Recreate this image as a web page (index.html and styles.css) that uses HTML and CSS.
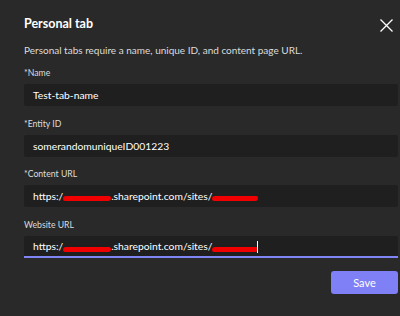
FILE: index.html
```html
<!DOCTYPE html>
<html lang="en">
<head>
  <meta charset="UTF-8">
  <title>Personal tab</title>
  <link rel="stylesheet" href="styles.css">
</head>
<body>

<div class="dialog">

  <header class="head">
    <h1>Personal tab</h1>
    <svg class="close" width="13" height="13" viewBox="0 0 13 13">
      <path d="M0.5 0.5 L12.5 12.5 M12.5 0.5 L0.5 12.5" stroke="#ffffff" stroke-width="1.3" fill="none"/>
    </svg>
  </header>

  <p class="intro">Personal tabs require a name, unique ID, and content page URL.</p>

  <div class="field">
    <label>*Name</label>
    <div class="box">Test-tab-name</div>
  </div>

  <div class="field">
    <label>*Entity ID</label>
    <div class="box">somerandomuniqueID001223</div>
  </div>

  <div class="field">
    <label>*Content URL</label>
    <div class="box">https:/<span class="redact r1"></span>.sharepoint.com/sites/<span class="redact r2"></span></div>
  </div>

  <div class="field">
    <label>Website URL</label>
    <div class="box active">https:/<span class="redact r1"></span>.sharepoint.com/sites/<span class="redact r2"></span><span class="caret"></span></div>
  </div>

  <div class="actions">
    <button class="save">Save</button>
  </div>

</div>

</body>
</html>
```

FILE: styles.css
```css
html{
  font-family: Lato, "Open Sans", sans-serif;
}

body{
  margin: 0;
  background-color: #292929;
  color: #ffffff;
}

.dialog{
  padding: 14px 2px 0 24px;
}

.head{
  display: flex;
  justify-content: space-between;
  align-items: center;
  height: 20px;
  padding-right: 5px;
}

.head h1{
  margin: 0;
  font-size: 12.5px;
  font-weight: 700;
  line-height: 20px;
}

.close{
  display: block;
  margin-top: 2px;
}

.intro{
  margin: 9px 0 9px;
  font-size: 10px;
  line-height: 14px;
  color: #dcdcdc;
}

.field{
  margin-bottom: 10.5px;
}

.field label{
  display: block;
  font-size: 8.7px;
  line-height: 14px;
  color: #dcdcdc;
  margin-bottom: 4px;
}

.box{
  box-sizing: border-box;
  height: 22px;
  padding: 0 9px;
  background-color: #1f1f1f;
  border-radius: 2px;
  font-size: 10.3px;
  line-height: 22px;
  white-space: nowrap;
  overflow: hidden;
}

.box.active{
  border-bottom: 2px solid #7f85f5;
  border-radius: 2px 2px 0 0;
  line-height: 21px;
}

/* red scribble over the hidden part of the url */
.redact{
  display: inline-block;
  vertical-align: top;
  height: 5px;
  margin-top: 11px;
  border-radius: 3px 2px 3px 2px;
  background-color: #f00000;
}

.redact.r1{
  width: 48px;
}

.redact.r2{
  width: 46px;
}

.caret{
  display: inline-block;
  width: 1px;
  height: 12px;
  background-color: #ffffff;
  vertical-align: middle;
  margin-left: -1px;
}

.actions{
  display: flex;
  justify-content: flex-end;
  padding-top: 3px;
}

.save{
  width: 67px;
  height: 23px;
  border: none;
  border-radius: 3px;
  background-color: #7f7ff6;
  color: #ffffff;
  font-family: Lato, sans-serif;
  font-size: 11px;
}
```
